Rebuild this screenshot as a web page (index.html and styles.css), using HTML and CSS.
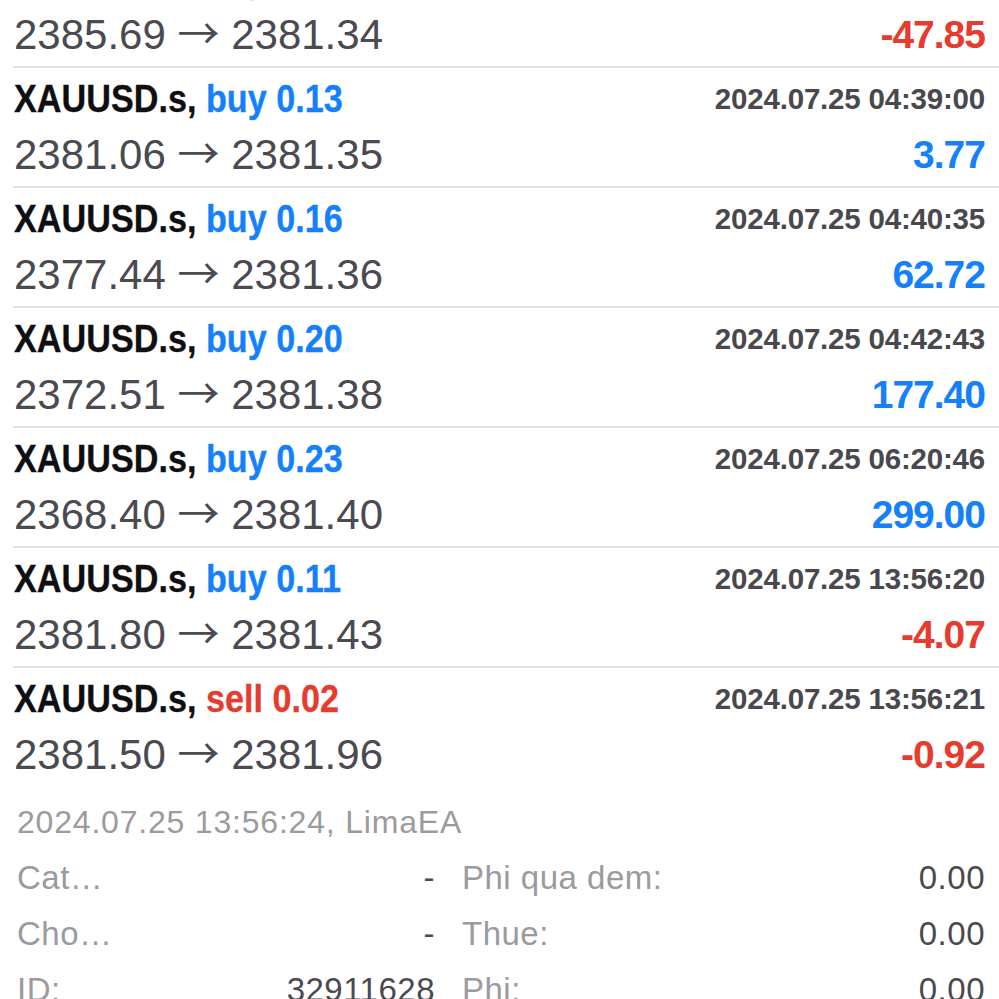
FILE: index.html
```html
<!DOCTYPE html>
<html lang="vi">

<head>
    <meta charset="UTF-8">
    <title>Lich su</title>
    <link rel="stylesheet" href="styles.css">
</head>

<body>

    <section class="lenh">

        <article class="deal">
            <div class="dong">
                <p class="ten">XAUUSD.s, <span class="buy">buy 0.10</span></p>
                <p class="ngay">2024.07.25 04:37:12</p>
            </div>
            <div class="dong">
                <p class="gia">2385.69 <span class="pil">→</span> 2381.34</p>
                <p class="loi am">-47.85</p>
            </div>
        </article>

        <article class="deal">
            <div class="dong">
                <p class="ten">XAUUSD.s, <span class="buy">buy 0.13</span></p>
                <p class="ngay">2024.07.25 04:39:00</p>
            </div>
            <div class="dong">
                <p class="gia">2381.06 <span class="pil">→</span> 2381.35</p>
                <p class="loi">3.77</p>
            </div>
        </article>

        <article class="deal">
            <div class="dong">
                <p class="ten">XAUUSD.s, <span class="buy">buy 0.16</span></p>
                <p class="ngay">2024.07.25 04:40:35</p>
            </div>
            <div class="dong">
                <p class="gia">2377.44 <span class="pil">→</span> 2381.36</p>
                <p class="loi">62.72</p>
            </div>
        </article>

        <article class="deal">
            <div class="dong">
                <p class="ten">XAUUSD.s, <span class="buy">buy 0.20</span></p>
                <p class="ngay">2024.07.25 04:42:43</p>
            </div>
            <div class="dong">
                <p class="gia">2372.51 <span class="pil">→</span> 2381.38</p>
                <p class="loi">177.40</p>
            </div>
        </article>

        <article class="deal">
            <div class="dong">
                <p class="ten">XAUUSD.s, <span class="buy">buy 0.23</span></p>
                <p class="ngay">2024.07.25 06:20:46</p>
            </div>
            <div class="dong">
                <p class="gia">2368.40 <span class="pil">→</span> 2381.40</p>
                <p class="loi">299.00</p>
            </div>
        </article>

        <article class="deal">
            <div class="dong">
                <p class="ten">XAUUSD.s, <span class="buy">buy 0.11</span></p>
                <p class="ngay">2024.07.25 13:56:20</p>
            </div>
            <div class="dong">
                <p class="gia">2381.80 <span class="pil">→</span> 2381.43</p>
                <p class="loi am">-4.07</p>
            </div>
        </article>

        <article class="deal sidste">
            <div class="dong">
                <p class="ten">XAUUSD.s, <span class="sell">sell 0.02</span></p>
                <p class="ngay">2024.07.25 13:56:21</p>
            </div>
            <div class="dong">
                <p class="gia">2381.50 <span class="pil">→</span> 2381.96</p>
                <p class="loi am">-0.92</p>
            </div>
        </article>

    </section>

    <section class="chitiet">
        <p class="tid">2024.07.25 13:56:24, LimaEA</p>

        <div class="bang">
            <div class="o"><span class="nhan">Cat…</span><span class="vaerdi">-</span></div>
            <div class="o"><span class="nhan">Phi qua dem:</span><span class="vaerdi">0.00</span></div>

            <div class="o"><span class="nhan">Cho…</span><span class="vaerdi">-</span></div>
            <div class="o"><span class="nhan">Thue:</span><span class="vaerdi">0.00</span></div>

            <div class="o"><span class="nhan">ID:</span><span class="vaerdi">32911628</span></div>
            <div class="o"><span class="nhan">Phi:</span><span class="vaerdi">0.00</span></div>
        </div>
    </section>

</body></html>
```

FILE: styles.css
```css
body {
    margin: 0;
    background-color: #fff;
    font-family: 'Liberation Sans', Arial, sans-serif;
    overflow: hidden;
}

p {
    margin: 0;
}

/* liste med lukkede ordrer */
.lenh {
    margin-top: -52px;
}

.deal {
    margin-left: 13px;
    padding: 3px 14px 3px 1px;
    border-bottom: 2px solid #e4e4e7;
}

.deal.sidste {
    border-bottom: none;
}

.dong {
    display: flex;
    justify-content: space-between;
    align-items: flex-start;
    height: 56px;
    line-height: 56px;
    white-space: nowrap;
}

.ten {
    font-weight: bold;
    font-size: 39px;
    color: #0f0f11;
    -webkit-text-stroke: 0.3px #0f0f11;
    transform: scaleX(0.877);
    transform-origin: left center;
}

.buy {
    color: #1480fa;
    -webkit-text-stroke: 0.3px #1480fa;
}

.sell {
    color: #e63b2e;
    -webkit-text-stroke: 0.3px #e63b2e;
}

.ngay {
    font-weight: bold;
    font-size: 29.5px;
    letter-spacing: -0.2px;
    color: #48484d;
}

.gia {
    font-size: 42px;
    color: #4a4a50;
}

.pil {
    font-family: 'Noto Sans CJK JP', sans-serif;
    line-height: 0;
}

.loi {
    font-weight: bold;
    font-size: 39px;
    letter-spacing: -1px;
    color: #1480fa;
}

.loi.am {
    color: #e63b2e;
}

/* detaljer nederst */
.chitiet {
    padding: 8px 14px 0 17px;
}

.tid {
    font-size: 32px;
    line-height: 56px;
    letter-spacing: 0.8px;
    color: #9b9b9e;
}

.bang {
    display: grid;
    grid-template-columns: 418px 1fr;
    column-gap: 27px;
}

.o {
    display: flex;
    justify-content: space-between;
    height: 56px;
    line-height: 56px;
    font-size: 33px;
    letter-spacing: 0.5px;
    white-space: nowrap;
}

.nhan {
    color: #9b9b9e;
}

.vaerdi {
    color: #4a4a50;
}
```
